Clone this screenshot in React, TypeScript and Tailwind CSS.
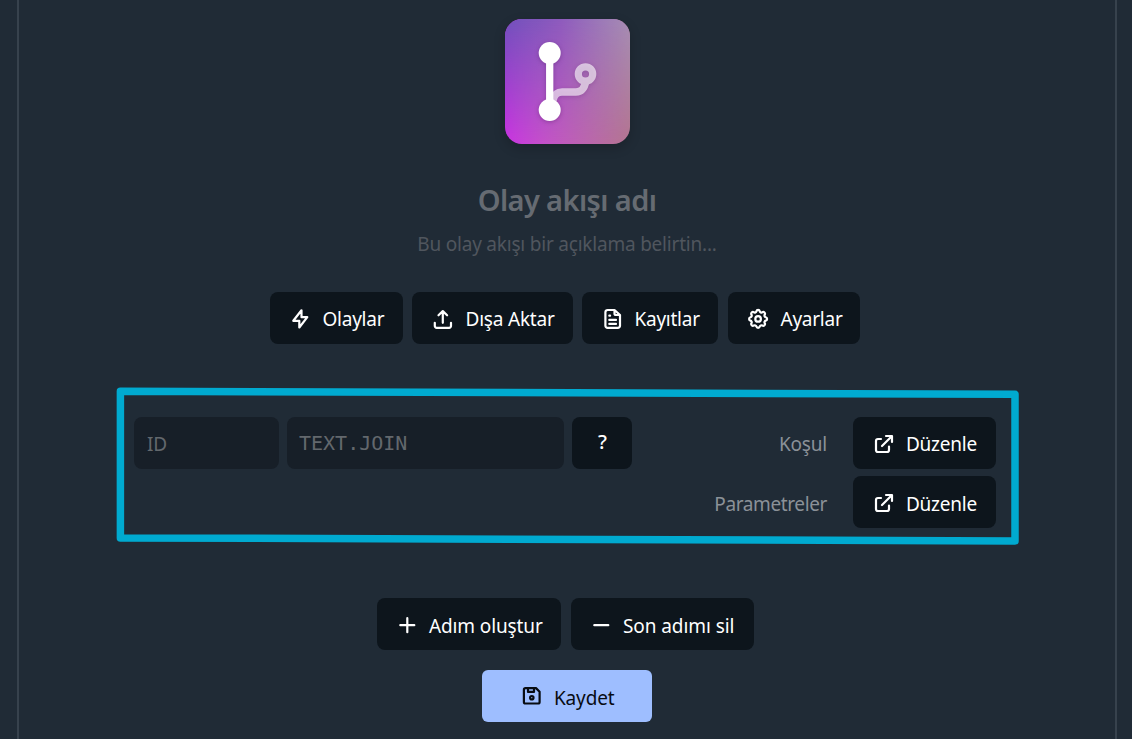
import type { ReactNode } from "react";

function Icon({ children, width = 2.2, className = "" }: { children: ReactNode; width?: number; className?: string }) {
  return (
    <svg
      viewBox="0 0 24 24"
      className={`size-6 shrink-0 ${className}`}
      fill="none"
      stroke="currentColor"
      strokeWidth={width}
      strokeLinecap="round"
      strokeLinejoin="round"
    >
      {children}
    </svg>
  );
}

function Button({ icon, label, className = "", text = "pt-0.5 tracking-[-0.25px]" }: { icon: ReactNode; label: string; className?: string; text?: string }) {
  return (
    <button className={`flex h-[52px] shrink-0 items-center gap-2.5 rounded-lg bg-[#0d151c] pl-[18px] text-white ${className}`}>
      {icon}
      <span className={`ml-px whitespace-nowrap ${text}`}>{label}</span>
    </button>
  );
}

const BoltIcon = () => (
  <Icon>
    <path d="M13.500 4.300 5.300 14.800H11.300V21.500L19.300 11.200H13.500z" />
  </Icon>
);

const ExportIcon = () => (
  <Icon className="ml-0.5">
    <path d="M2.800 16.800v3.200A1.800 1.800 0 0 0 4.600 21.800h12.600A1.800 1.800 0 0 0 19 20v-3.200M10.800 16.800V5.500M6.500 9.300l4.300-4.200 4.300 4.200" />
  </Icon>
);

const LogIcon = () => (
  <Icon>
    <path d="M14.500 4H7.600a2.200 2.200 0 0 0-2.200 2.200v13.500a2.200 2.200 0 0 0 2.200 2.200h10.200a2.200 2.200 0 0 0 2.200-2.200V9zM14.500 4v3.500A1.500 1.500 0 0 0 16 9h3.500M9.300 9.700h.8M9.300 13.900h6.700M9.300 17.900h6.700" />
  </Icon>
);

const GearIcon = () => (
  <Icon>
    <g transform="translate(0.100 0.900)">
      <path d="M10.325 4.317c.426-1.756 2.924-1.756 3.350 0a1.724 1.724 0 0 0 2.573 1.066c1.543-.94 3.310.826 2.370 2.370a1.724 1.724 0 0 0 1.065 2.572c1.756.426 1.756 2.924 0 3.350a1.724 1.724 0 0 0-1.066 2.573c.94 1.543-.826 3.310-2.370 2.370a1.724 1.724 0 0 0-2.572 1.065c-.426 1.756-2.924 1.756-3.350 0a1.724 1.724 0 0 0-2.573-1.066c-1.543.94-3.310-.826-2.370-2.370a1.724 1.724 0 0 0-1.065-2.572c-1.756-.426-1.756-2.924 0-3.350a1.724 1.724 0 0 0 1.066-2.573c-.94-1.543.826-3.310 2.370-2.370 1 .608 2.296.07 2.572-1.065z" />
      <circle cx="12" cy="12" r="2.800" />
    </g>
  </Icon>
);

const EditIcon = () => (
  <Icon>
    <path d="M10 8H7a2 2 0 0 0-2 2v9a2 2 0 0 0 2 2h9a2 2 0 0 0 2-2v-3.500M11 15 20.500 5.500M15 5h6v6" />
  </Icon>
);

const PlusIcon = () => (
  <Icon>
    <path d="M12.300 6.200v14M5.300 13.200h14" />
  </Icon>
);

const MinusIcon = () => (
  <Icon>
    <path d="M5.300 13.200h14" />
  </Icon>
);

const SaveIcon = () => (
  <Icon>
    <path d="M6.500 4.100H17l3.600 3.600v10.200a1.600 1.600 0 0 1-1.600 1.600H6.500a1.600 1.600 0 0 1-1.600-1.600V5.700a1.600 1.600 0 0 1 1.600-1.600zM9 4.500v3.400h6V4.500" />
    <circle cx="12.800" cy="13.700" r="1.700" />
  </Icon>
);

function Logo() {
  return (
    <div className="relative size-[125px] shrink-0 overflow-hidden rounded-[17px] bg-linear-to-r from-[#cb31e2] to-[#b47590]">
      <div className="absolute inset-0 bg-linear-to-r from-[#7050bc] via-[#8e5bbd] via-45% to-[#a68db3] [mask-image:linear-gradient(to_bottom,black,transparent)]" />
      <svg viewBox="0 0 125 125" className="absolute inset-0 drop-shadow-[0_1px_2px_rgba(70,20,90,0.35)]" fill="none">
        <g opacity="0.62" stroke="white">
          <circle cx="80.500" cy="55" r="7.200" strokeWidth="7.200" />
          <path d="M48 81C49.500 75.500 52 73 57 73H71C76 73 79.500 69.500 80.500 63" strokeWidth="7.600" />
        </g>
        <path d="M44.700 34v57" stroke="white" strokeWidth="7.300" />
        <circle cx="44.700" cy="34" r="11" fill="white" />
        <circle cx="44.700" cy="91" r="11" fill="white" />
      </svg>
    </div>
  );
}

export default function App() {
  return (
    <div className="h-[739px] w-[1132px] overflow-hidden bg-[#202b36] pr-[15px] pl-[17px] font-['Noto_Sans',sans-serif] text-[19px] leading-[26px]">
      <main className="relative flex h-full flex-col items-center border-x-2 border-[#37424d] pt-[19px]">
        <div className="rounded-[17px] shadow-[0_4px_12px_rgba(0,0,0,0.2)]">
          <Logo />
        </div>
        <h1 className="mt-[35px] text-[29px] leading-[42px] font-semibold tracking-[-0.6px] whitespace-nowrap text-[#666b72]">
          Olay akışı adı
        </h1>
        <p className="mt-[10px] tracking-[-0.21px] whitespace-nowrap text-[#50565e]">Bu olay akışı bir açıklama belirtin...</p>

        <div className="mt-[35px] mr-[5px] flex">
          <Button icon={<BoltIcon />} label="Olaylar" className="w-[133px]" />
          <Button icon={<ExportIcon />} label="Dışa Aktar" className="ml-[9px] w-[161px]" text="-translate-x-px pt-0.5 tracking-[-0.2px]" />
          <Button icon={<LogIcon />} label="Kayıtlar" className="ml-[9px] w-[136px]" />
          <Button icon={<GearIcon />} label="Ayarlar" className="ml-2.5 w-[132px]" />
        </div>

        <section className="mt-[73px] mr-[4px] flex w-[862px] items-start justify-between">
          <div className="flex gap-2">
            <input
              placeholder="ID"
              className="h-[52px] w-[145px] rounded-lg bg-[#171f28] px-[13px] pt-0.5 tracking-[-0.3px] placeholder-[#63686d] outline-none"
            />
            <input
              placeholder="TEXT.JOIN"
              className="h-[52px] w-[277px] rounded-lg bg-[#171f28] px-3 font-['DejaVu_Sans_Mono',monospace] text-[20px] placeholder-[#63686d] outline-none"
            />
            <button className="h-[52px] w-[60px] rounded-lg bg-[#0d151c] pb-0.5 pl-px text-[20px] font-medium text-white">?</button>
          </div>
          <div className="flex flex-col gap-[7px] text-[#8b9198]">
            <div className="flex items-center justify-end gap-[26px]">
              <span className="pt-0.5 tracking-[-0.2px]">Koşul</span>
              <Button icon={<EditIcon />} label="Düzenle" className="w-[143px]" />
            </div>
            <div className="flex items-center justify-end gap-[26px]">
              <span className="pt-1 tracking-[-0.38px]">Parametreler</span>
              <Button icon={<EditIcon />} label="Düzenle" className="w-[143px]" text="pt-1 tracking-[-0.25px]" />
            </div>
          </div>
        </section>

        <div className="mt-[70px] mr-[3px] flex gap-2.5">
          <Button icon={<PlusIcon />} label="Adım oluştur" className="w-[184px]" text="-translate-x-px pt-1 tracking-[-0.12px]" />
          <Button icon={<MinusIcon />} label="Son adımı sil" className="w-[183px]" text="-translate-x-px pt-1 tracking-[-0.08px]" />
        </div>
        <button className="mt-5 flex h-[52px] w-[170px] shrink-0 items-center gap-2.5 rounded-md bg-[#9ebeff] pl-[37px] text-[#080c12]">
          <SaveIcon />
          <span className="ml-px pt-1 tracking-[-0.15px]">Kaydet</span>
        </button>

        <svg className="pointer-events-none absolute top-0 -left-[19px] h-[739px] w-[1132px]" viewBox="0 0 1132 739" fill="none">
          <path
            d="M120.400 391.200 1015 394.300V540.900L120.400 537.900Z"
            stroke="#00aad0"
            strokeWidth="7.500"
            strokeLinejoin="round"
          />
        </svg>
      </main>
    </div>
  );
}
